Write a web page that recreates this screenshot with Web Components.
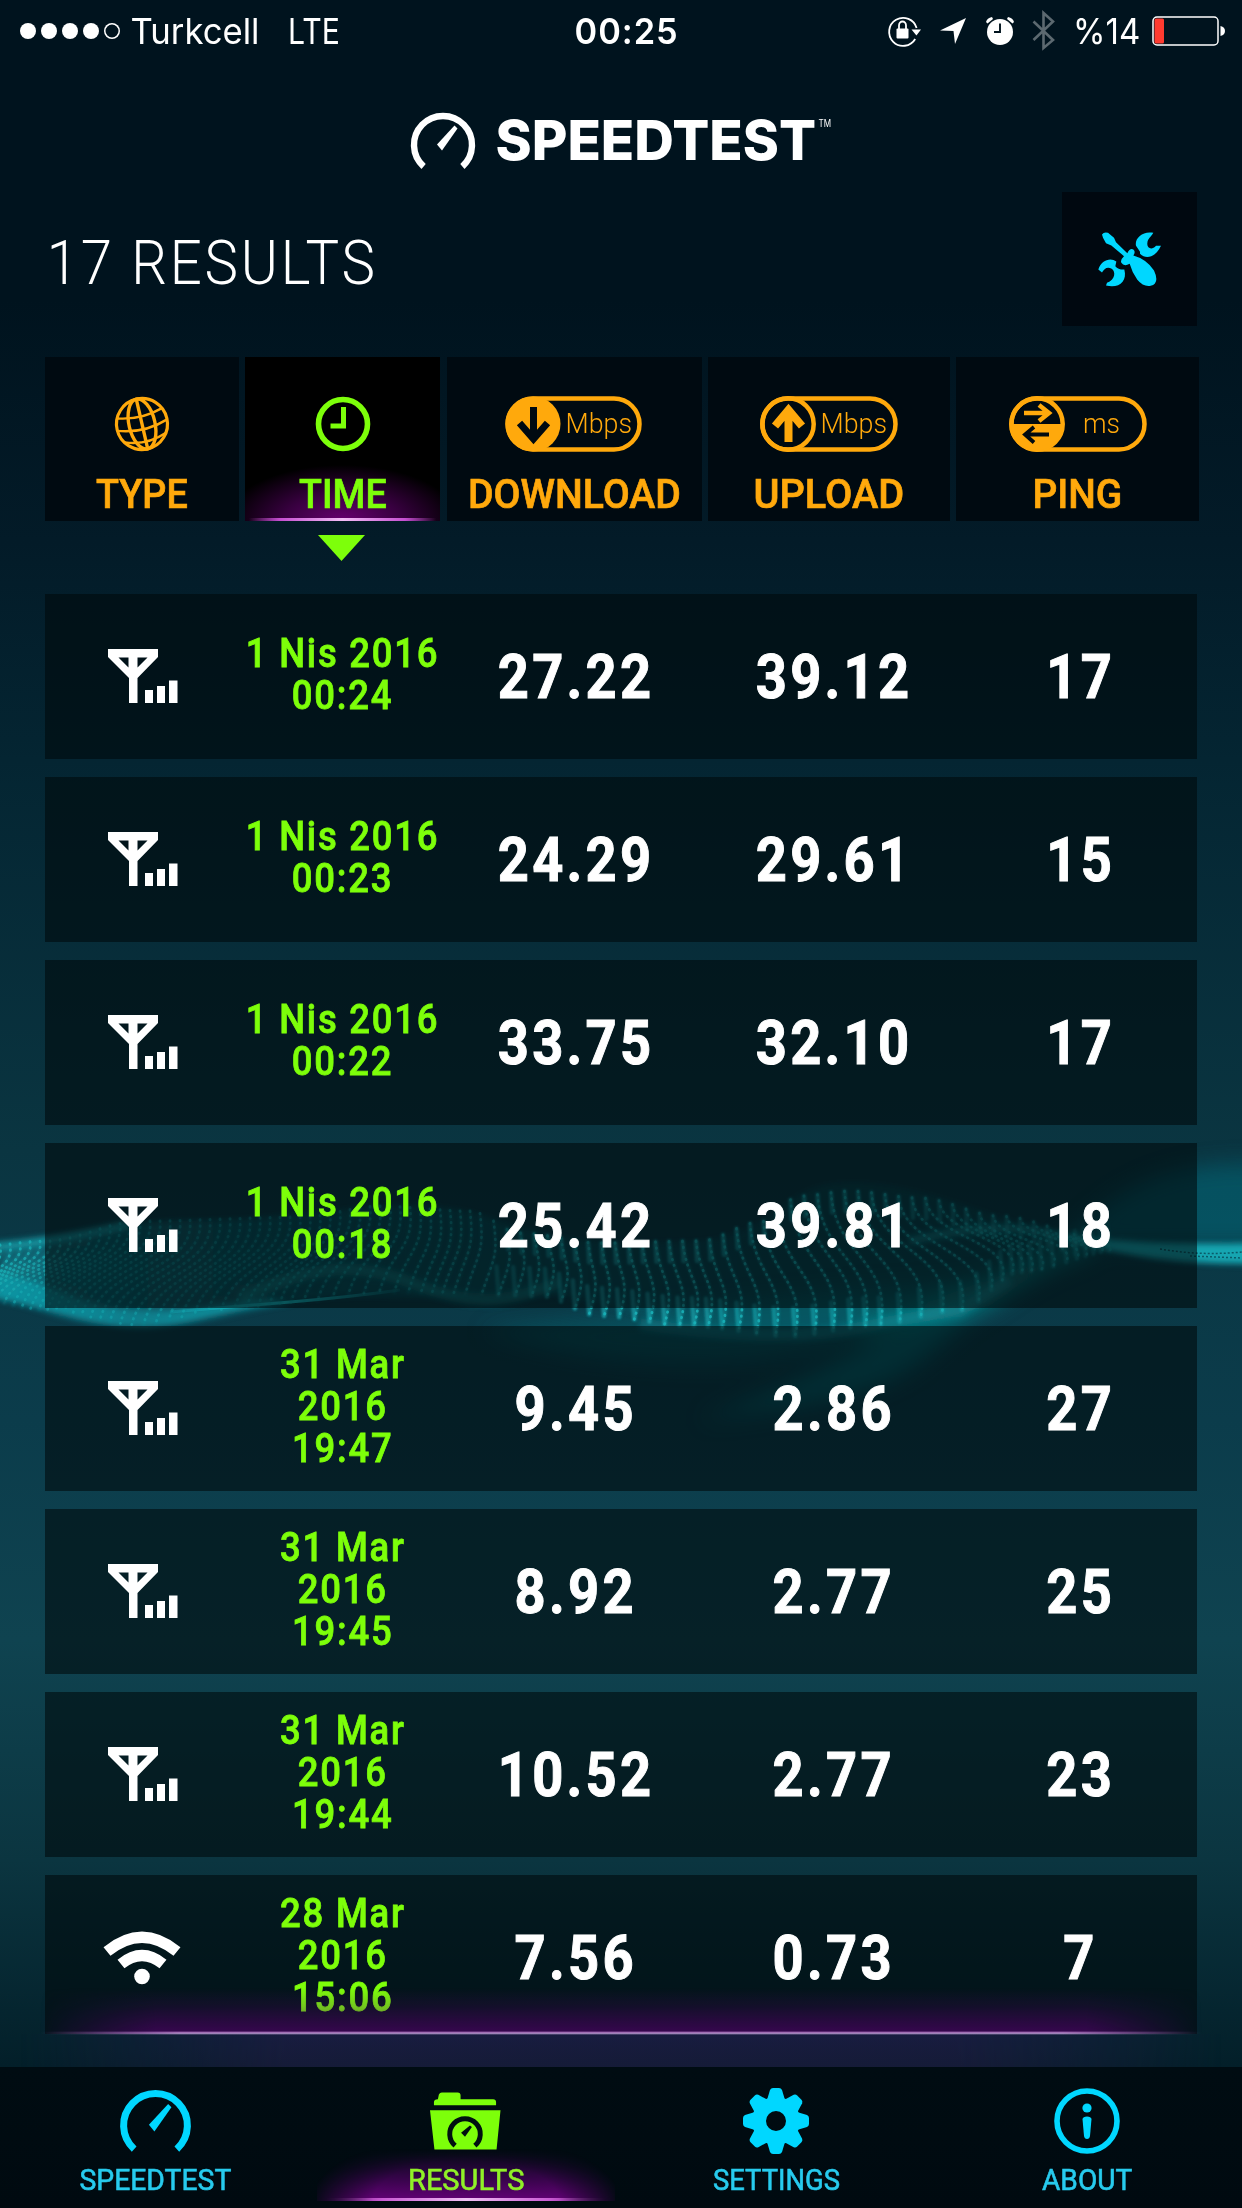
<!DOCTYPE html>
<html lang="tr">
<head>
<meta charset="utf-8">
<title>Speedtest</title>
<style>
    body {
        margin: 0;
        background: #00131e;
    }
</style>
</head>
<body>
<speedtest-app></speedtest-app>

<script>
const gauge = `
    <path d="M12.6 61.5A29 29 0 1 1 51.4 61.5" fill="none" stroke="currentColor" stroke-width="6.4"/>
    <path d="M26 39.5 43.5 20.5 46.5 23.5 31 45.5Z" fill="currentColor"/>
`;

const pill = `<rect x="2.5" y="2.5" width="133" height="51" rx="25.5" fill="none" stroke="currentColor" stroke-width="4.5"/>`;

// [viewBox, markup]
const icons = {
  gauge: ['0 6 64 60', gauge],
  lock: ['0 0 34 34', `
    <path d="M28.2 25A14 14 0 1 1 29.6 14" fill="none" stroke="currentColor" stroke-width="1.8"/>
    <path d="M24.5 15.5H34L29.4 21.5Z" fill="currentColor"/>
    <rect x="9.5" y="14.5" width="12" height="10" rx="1" fill="currentColor"/>
    <path d="M12 15V11.5a3.5 4 0 0 1 7 0V15" fill="none" stroke="currentColor" stroke-width="1.8"/>
  `],
  arrow: ['0 0 26 26', `<path d="M26 0 15 26 13.5 13 0 12.5Z" fill="currentColor"/>`],
  alarm: ['0 0 28 28', `
    <circle cx="14" cy="15" r="13" fill="currentColor"/>
    <path d="M0 5Q1 1 6 0L7 2 1.5 6.500ZM28 5Q27 1 22 0L21 2 26.500 6.500Z" fill="currentColor"/>
    <path d="M14 6.500V15H8" fill="none" stroke="#00131e" stroke-width="1.900"/>
  `],
  bluetooth: ['0 0 23 42', `<path d="M1.500 11.500 21 30 11.500 38V3L21 11.500 1.500 30" fill="none" stroke="currentColor" stroke-width="2.600"/>`],
  battery: ['0 0 73 30', `
    <rect x="1" y="1" width="65" height="28" rx="4" fill="none" stroke="currentColor" stroke-width="1.500"/>
    <rect x="2.500" y="2.500" width="9.500" height="25" rx="1.500" fill="#ff3b30"/>
    <path d="M68.500 10Q73 11 73 15T68.500 20Z" fill="currentColor"/>
  `],
  tools: ['54 50 192 170', `
    <g fill="currentColor">
      <path d="M66 60Q72 51 84 55L102 70 108 83 142 116Q150 100 160 105 168 111 160 123 200 134 222 168 240 206 212 214 190 218 172 196 156 174 149 148 132 158 124 145 120 136 132 125L94 93 78 86 69 70Z"/>
      <path d="M220 55C190 48 163 70 168 94L180 112V118C198 136 228 128 243 94L228 94C216 108 200 102 202 86 203 72 213 68 220 55Z"/>
      <path d="M55 165C63 137 92 127 109 141L106 155Q115 166 133 165C143 202 115 223 78 213L81 205C106 196 108 172 95 163 82 155 72 163 66 174Z"/>
    </g>
  `],
  globe: ['0 0 56 56', `
    <g fill="none" stroke="currentColor" stroke-width="2.400" transform="rotate(-13 28 28)">
      <circle cx="28" cy="28" r="25.500" stroke-width="3.200"/>
      <ellipse cx="28" cy="28" rx="13" ry="25.500" stroke-width="3.400"/>
      <path d="M28 2V54" stroke-width="3.400"/>
      <path d="M5 17Q28 24 51 17M2 29Q28 38 54 29M7 42Q28 50 49 42"/>
    </g>
  `],
  clock: ['0 0 56 56', `
    <circle cx="28" cy="28" r="24.500" fill="none" stroke="currentColor" stroke-width="5.600"/>
    <path d="M28.500 11V30H15.500" fill="none" stroke="currentColor" stroke-width="5"/>
  `],
  download: ['0 0 138 56', `
    <rect x="2.500" y="2.500" width="132" height="51" rx="25.500" fill="none" stroke="currentColor" stroke-width="4.500"/>
    <circle cx="28" cy="28" r="27.500" fill="currentColor"/>
    <path d="M28.500 11V42M14.500 27 28.500 43 42.500 27" fill="none" stroke="#000a11" stroke-width="7"/>
  `],
  upload: ['0 0 138 56', `${pill}
    <circle cx="28" cy="28" r="25.700" fill="none" stroke="currentColor" stroke-width="4.500"/>
    <path d="M28.500 46V14M15 30 28.500 14 42 30" fill="none" stroke="currentColor" stroke-width="8"/>
  `],
  ping: ['0 0 138 56', `${pill}
    <circle cx="28" cy="28" r="25.700" fill="none" stroke="currentColor" stroke-width="4.500"/>
    <path d="M2 28H54A26 26 0 0 1 2 28Z" fill="currentColor"/>
    <path d="M15 17H39M30 9 40 17 30 25" fill="none" stroke="currentColor" stroke-width="4.500"/>
    <path d="M40 38.500H17M25 31 16 38.500 25 46.500" fill="none" stroke="#000a11" stroke-width="3.800"/>
  `],
  cell: ['0 0 70 55', `
    <path d="M0 0H50V8L29.500 29V54H21V29L0 8ZM10.500 8.500 20.500 18.500V8.500ZM29.500 8.500V18.500L39.500 8.500Z" fill="currentColor" fill-rule="evenodd"/>
    <path d="M37 41H45V54H37ZM49 37H57V54H49ZM61 31.500H69.500V54H61Z" fill="currentColor"/>
  `],
  wifi: ['0 0 78 54', `
    <path d="M4 20.500Q39 -8 74 20.500M18 33Q39 16 60 33" fill="none" stroke="currentColor" stroke-width="11"/>
    <circle cx="39" cy="45.500" r="7.800" fill="currentColor"/>
  `],
  folder: ['0 0 72 58', `
    <path d="M4 13V10Q4 7 8 7L9 2Q10 0 12 0H28Q31 0 31 3V7H64Q67 7 67 10V13ZM0 18H71.500L67.500 58H4.500Z" fill="currentColor"/>
    <path d="M25.500 54A15.500 15.500 0 1 1 45.500 54" fill="none" stroke="#001010" stroke-width="5"/>
    <path d="M31.500 41 40.500 33.500 42.500 35 35.500 45Z" fill="#001010"/>
  `],
  gear: ['-33 -33 66 66', `
    <circle r="17" fill="none" stroke="currentColor" stroke-width="14"/>
    ${[0, 45, 90, 135, 180, 225, 270, 315].map(a => `
      <path transform="rotate(${a})" d="M-9 -21-6 -31Q-5 -33-3 -33H3Q5 -33 6 -31L9 -21Z" fill="currentColor"/>
    `).join('')}
  `],
  info: ['0 0 66 66', `
    <circle cx="33" cy="33" r="30" fill="none" stroke="currentColor" stroke-width="5.600"/>
    <circle cx="33" cy="20" r="4.600" fill="currentColor"/>
    <path d="M28.500 31Q29 28.500 33 28.500T37.500 31L36 48Q35.500 51 33 51T30 48Z" fill="currentColor"/>
  `],
};

class AppIcon extends HTMLElement {
  constructor() {
    super();
    this.root = this.attachShadow({ mode: 'open' });
  }

  connectedCallback() {
    const [box, markup] = icons[this.getAttribute('name')];
    const width = this.getAttribute('width');
    const height = this.getAttribute('height');
    this.root.innerHTML = `
      <style>
        :host { display: block; flex: none; width: ${width}px; height: ${height}px; }
        svg { display: block; overflow: visible; }
      </style>
      <svg width="${width}" height="${height}" viewBox="${box}">${markup}</svg>
    `;
  }
}

// Condenses or widens its text to the given width
class FitText extends HTMLElement {
  constructor() {
    super();
    this.root = this.attachShadow({ mode: 'open' });
  }

  connectedCallback() {
    const width = Number(this.getAttribute('width'));
    this.root.innerHTML = `
      <style>
        :host { display: flex; flex: none; justify-content: center; width: ${width}px; }
        span { flex: none; display: block; white-space: nowrap; }
      </style>
      <span><slot></slot></span>
    `;
    const span = this.root.querySelector('span');
    const spacing = parseFloat(getComputedStyle(span).letterSpacing) || 0;
    span.style.marginRight = `${-spacing}px`;
    span.style.transform = `scaleX(${width / (span.offsetWidth - spacing)})`;
  }
}

class WaveBackdrop extends HTMLElement {
  constructor() {
    super();
    this.root = this.attachShadow({ mode: 'open' });
    this.root.innerHTML = `
      <style>
        :host { display: block; }
        svg { display: block; }
      </style>
      <svg width="1242" height="330" viewBox="0 1130 1242 330">
        <defs>
          <filter id="soft" x="-20%" y="-40%" width="140%" height="180%"><feGaussianBlur stdDeviation="3"/></filter>
          <filter id="haze" x="-30%" y="-60%" width="160%" height="220%"><feGaussianBlur stdDeviation="11"/></filter>
          <filter id="smooth" x="-5%" y="-10%" width="110%" height="120%"><feGaussianBlur stdDeviation=".9"/></filter>
          <linearGradient id="sheet">
            <stop offset="0" stop-color="#11a3b4" stop-opacity=".42"/>
            <stop offset=".25" stop-color="#11838e" stop-opacity=".3"/>
            <stop offset=".6" stop-color="#118a94" stop-opacity=".14"/>
            <stop offset="1" stop-color="#11838e" stop-opacity=".14"/>
          </linearGradient>
          <linearGradient id="rim">
            <stop offset="0" stop-color="#13aebb" stop-opacity=".3"/>
            <stop offset=".5" stop-color="#18c0ca"/>
            <stop offset="1" stop-color="#18b9c2" stop-opacity=".15"/>
          </linearGradient>
          <linearGradient id="foot">
            <stop offset="0" stop-color="#10a0ae" stop-opacity=".85"/>
            <stop offset=".5" stop-color="#10a0ae" stop-opacity=".5"/>
            <stop offset="1" stop-color="#14b4c0" stop-opacity=".8"/>
          </linearGradient>
        </defs>
        <g filter="url(#haze)">
          <path d="M1060 1245C1110 1200 1150 1158 1270 1165V1245H1080Z" fill="#0a7385" opacity=".45"/>
          <path d="M1110 1235C1030 1280 990 1300 940 1345S850 1400 700 1420C800 1380 880 1350 930 1300Z" fill="#0c8791" opacity=".5"/>
          <path d="M480 1330C600 1370 760 1380 900 1330L1000 1280 850 1290Z" fill="#0c8791" opacity=".28"/>
          <path d="M1090 1245Q1030 1262 990 1295L860 1330" stroke="#0d9a97" stroke-width="20" fill="none" opacity=".38"/>
        </g>
        <g filter="url(#soft)">
          <path d="M0 1246C60 1240 110 1220 200 1220S360 1202 430 1206 520 1240 620 1242 740 1240 790 1200 940 1196 1000 1216 1100 1240 1242 1244V1264C1160 1264 1120 1254 1060 1240 1000 1290 960 1312 900 1326S760 1340 690 1326 560 1285 480 1294 360 1290 290 1303 180 1330 120 1326 40 1306 0 1300Z" fill="url(#sheet)"/>
          <path d="M-20 1268C40 1278 80 1306 130 1310S200 1306 270 1299L290 1303C220 1308 190 1328 140 1328S50 1306 -20 1296Z" fill="url(#foot)"/>
          <path d="M-20 1247Q50 1243 130 1224" stroke="#19b5c0" stroke-width="7" fill="none" opacity=".7"/>
          <path d="M1050 1236C1120 1240 1160 1246 1262 1243V1264C1160 1264 1120 1254 1050 1236Z" fill="#17b7c2" opacity=".85"/>
          <path d="M910 1241Q990 1222 1040 1232T1110 1245" stroke="#16a0a6" stroke-width="7" fill="none" opacity=".6"/>
          <path d="M640 1324Q780 1344 860 1328T960 1311L1010 1280" stroke="#12949f" stroke-width="12" fill="none" opacity=".4"/>
          <path d="M240 1298C320 1262 360 1262 420 1286S520 1298 560 1282" stroke="#14888e" stroke-width="11" fill="none" opacity=".6"/>
        </g>
        <path d="M170 1312Q230 1307 290 1302T400 1290" stroke="url(#rim)" stroke-width="3" fill="none"/>
        <path d="M1160 1249Q1200 1256 1242 1252M1190 1256L1242 1258" stroke="#0a5a68" stroke-width="1.500" stroke-dasharray="2 2" fill="none"/>
        <g class="strands" fill="none" stroke-linecap="round"></g>
      </svg>
    `;
    this.drawStrands();
  }

  drawStrands() {
    const top = [[-20, 1246], [45, 1241], [140, 1221], [300, 1217], [380, 1206], [470, 1211], [520, 1233], [600, 1243], [700, 1241], [760, 1222], [800, 1196], [850, 1191], [920, 1198], [1000, 1216], [1100, 1238]];
    const bottom = [[-20, 1300], [45, 1310], [140, 1325], [220, 1310], [300, 1302], [380, 1292], [480, 1294], [540, 1296], [600, 1316], [690, 1326], [790, 1336], [870, 1326], [960, 1310], [1020, 1272], [1120, 1250]];
    const skew = [[-20, -30], [60, -75], [200, -90], [340, -60], [450, -18], [560, 0], [700, 12], [820, 48], [900, 80], [1000, 60], [1100, 30]];
    const glow = [[-20, .8], [140, .4], [300, .35], [450, .5], [600, .9], [750, .85], [850, .7], [960, .5], [1100, .3]];
    const at = (points, x) => {
      let i = 1;
      while (i < points.length - 1 && points[i][0] < x) i++;
      const [[x0, y0], [x1, y1]] = [points[i - 1], points[i]];
      const t = Math.max(0, Math.min(1, (x - x0) / (x1 - x0)));
      return y0 + (y1 - y0) * t * t * (3 - 2 * t);
    };
    let dots = '';
    let lines = '';
    for (let x = 0; x < 1080; x += x < 480 ? 10 : 13.5) {
      const end = x + at(skew, x);
      const y0 = at(top, x);
      const y1 = at(bottom, end);
      const mid = y0 + (y1 - y0) * 0.5;
      const d = `M${x} ${y0.toFixed(1)}C${x + 5} ${mid.toFixed(1)} ${end + 12} ${mid.toFixed(1)} ${end.toFixed(1)} ${y1.toFixed(1)}`;
      const o = at(glow, x);
      dots += `<path d="${d}" stroke="#1ab2b8" stroke-width="2.800" stroke-dasharray=".5 5.500" opacity="${o}"/>`;
      lines += `<path d="${d}" stroke="#14919a" stroke-width="3.200" opacity="${o * 0.55}"/>`;
      if (x > 500) {
        lines += `<path d="M${x} ${y0.toFixed(1)}l1 20M${end - 2} ${y1 - 28}L${end} ${y1.toFixed(1)}" stroke="#1ab2bb" stroke-width="4.500" opacity="${o * 0.65}"/>`;
      }
    }
    this.root.querySelector('.strands').innerHTML = `<g filter="url(#smooth)">${lines}</g>${dots}`;
  }
}

class StatusBar extends HTMLElement {
  constructor() {
    super();
    this.root = this.attachShadow({ mode: 'open' });
    this.root.innerHTML = `
      <style>
        :host {
            display: grid;
            grid-template-columns: 555px 1fr auto;
            align-items: center;
            height: 62px;
            box-sizing: border-box;
            padding: 0 17px 0 20px;
            font: 400 36px/62px Inter, sans-serif;
            color: #fff;
        }
        .left, .right { display: flex; align-items: center; }
        .dots { display: flex; gap: 5px; margin-right: 10px; }
        .dots i { width: 16px; height: 16px; border-radius: 50%; background: #fff; }
        .dots i:last-child { background: none; box-shadow: inset 0 0 0 1.5px #fff; }
        .net { margin-left: 29px; }
        .time { font-weight: 600; letter-spacing: 1px; }
        .dim { color: #5c6970; }
      </style>
      <div class="left">
        <div class="dots"><i></i><i></i><i></i><i></i><i></i></div>
        <fit-text width="129">Turkcell</fit-text>
        <fit-text class="net" width="52">LTE</fit-text>
      </div>
      <fit-text class="time" width="103">00:25</fit-text>
      <div class="right">
        <app-icon name="lock" width="34" height="34"></app-icon>
        <app-icon name="arrow" width="26" height="26" style="margin-left:19px"></app-icon>
        <app-icon name="alarm" width="28" height="28" style="margin-left:20px"></app-icon>
        <app-icon class="dim" name="bluetooth" width="23" height="42" style="margin-left:18px"></app-icon>
        <fit-text width="67" style="margin:0 12px 0 18px">%14</fit-text>
        <app-icon name="battery" width="73" height="30"></app-icon>
      </div>
    `;
  }
}

class BrandHeader extends HTMLElement {
  constructor() {
    super();
    this.root = this.attachShadow({ mode: 'open' });
    this.root.innerHTML = `
      <style>
        :host {
            display: flex;
            justify-content: center;
            align-items: flex-start;
            height: 130px;
            box-sizing: border-box;
            padding-top: 49px;
            color: #fff;
            font: 800 55px/58px Inter, sans-serif;
        }
        .name { margin-left: 21px; }
        .tm { margin-left: 2px; font: 400 10px/10px Inter, sans-serif; padding-top: 7px; }
      </style>
      <app-icon name="gauge" width="64" height="60"></app-icon>
      <fit-text class="name" width="321">SPEEDTEST</fit-text>
      <fit-text class="tm" width="13">TM</fit-text>
    `;
  }
}

class ResultsTitle extends HTMLElement {
  constructor() {
    super();
    this.root = this.attachShadow({ mode: 'open' });
    this.root.innerHTML = `
      <style>
        :host {
            display: flex;
            justify-content: space-between;
            height: 134px;
            margin: 0 45px 31px 47px;
            color: #fff;
            font: 300 61px/143px Roboto, sans-serif;
        }
        button {
            display: grid;
            place-items: center;
            width: 135px;
            height: 134px;
            padding: 0;
            border: 0;
            background: #000810;
            color: #00d7ff;
        }
      </style>
      <fit-text width="328" style="letter-spacing:3px"><slot></slot></fit-text>
      <button><app-icon name="tools" width="64" height="57"></app-icon></button>
    `;
  }
}

class SortTab extends HTMLElement {
  constructor() {
    super();
    this.root = this.attachShadow({ mode: 'open' });
    const unit = this.getAttribute('unit');
    this.root.innerHTML = `
      <style>
        :host {
            position: relative;
            display: flex;
            flex-direction: column;
            align-items: center;
            box-sizing: border-box;
            height: 164px;
            padding-top: 39px;
            background: #000a11;
            color: #ffa90c;
            font: 500 41px/50px Roboto, sans-serif;
        }
        :host([active]) { background: #000; color: #7dff0a; }
        :host([active])::before, :host([active])::after {
            content: '';
            position: absolute;
            inset: auto 0 0 0;
            height: 56px;
            background: radial-gradient(ellipse 60% 100% at 50% 100%, rgba(139, 0, 150, .75), rgba(110, 0, 125, .5) 50%, transparent);
        }
        :host([active])::after {
            height: 3px;
            background: linear-gradient(90deg, transparent 2%, #c54fd0 18%, #f3bdf6 50%, #c54fd0 82%, transparent 98%);
        }
        .icon { display: grid; height: 56px; margin-bottom: 17px; align-items: center; }
        .icon > * { grid-area: 1 / 1; }
        .label { -webkit-text-stroke: .7px; }
        .unit { position: relative; justify-self: end; font: 300 28px/56px Roboto, sans-serif; }
      </style>
      <div class="icon">
        <app-icon name="${this.getAttribute('icon')}" width="${unit ? 138 : 56}" height="56"></app-icon>
        ${unit ? `<fit-text class="unit" width="${unit === 'ms' ? 37 : 66}" style="margin-right:${unit === 'ms' ? 26 : 11}px">${unit}</fit-text>` : ''}
      </div>
      <fit-text class="label" width="${this.getAttribute('width')}"><slot></slot></fit-text>
    `;
  }
}

class ResultRow extends HTMLElement {
  constructor() {
    super();
    this.root = this.attachShadow({ mode: 'open' });
    const get = name => this.getAttribute(name);
    const wifi = get('type') === 'wifi';
    this.root.innerHTML = `
      <style>
        :host {
            display: grid;
            grid-template-columns: 194px 208px 254px 262px 232px;
            align-items: center;
            justify-items: center;
            flex: none;
            height: 165px;
            background: rgba(0, 8, 11, .58);
            color: #fff;
            font: 700 61px/160px Roboto, sans-serif;
        }
        .when {
            padding-bottom: 5px;
            margin: 0 -1px 0 -2px;
            color: #7dff0a;
            font: 500 40.5px/42px Roboto, sans-serif;
            letter-spacing: 2px;
            text-align: center;
            white-space: pre;
            transform: scaleX(.9);
            -webkit-text-stroke: .8px;
        }
        .value {
            transform: scaleX(.89);
            letter-spacing: 3.7px;
            margin: 1px -3.7px 0 0;
            -webkit-text-stroke: 1px;
        }
        app-icon { margin-left: ${wifi ? 0 : 2}px; }
      </style>
      <app-icon name="${get('type')}" width="${wifi ? 78 : 70}" height="${wifi ? 54 : 55}"></app-icon>
      <div class="when">${get('when').replaceAll('|', '\n')}</div>
      <div class="value">${get('down')}</div>
      <div class="value">${get('up')}</div>
      <div class="value">${get('ping')}</div>
    `;
  }
}

class ResultList extends HTMLElement {
  constructor() {
    super();
    this.root = this.attachShadow({ mode: 'open' });
    this.root.innerHTML = `
      <style>
        :host { position: relative; display: block; height: 1473px; }
        .rows {
            display: flex;
            flex-direction: column;
            gap: 18px;
            height: 1440px;
            padding: 0 45px;
            overflow: hidden;
        }
        .glow {
            position: absolute;
            inset: auto 40px 33px 40px;
            height: 46px;
            background: linear-gradient(transparent, rgba(85, 0, 105, .22) 40%, rgba(84, 0, 108, .68));
            mask: linear-gradient(90deg, transparent, #000 10%, #000 90%, transparent);
        }
        .line {
            position: absolute;
            inset: auto 40px 32px 40px;
            height: 4px;
            background: linear-gradient(transparent, #a06bb4 35%, #a58cc0 60%, transparent);
            mask: linear-gradient(90deg, transparent, #000 12%, #000 88%, transparent);
        }
        .below {
            position: absolute;
            inset: auto 20px 0 20px;
            height: 33px;
            background: linear-gradient(rgba(32, 26, 72, .7), rgba(30, 26, 62, .7));
            mask: linear-gradient(90deg, transparent, #000 22%, #000 78%, transparent);
        }
      </style>
      <div class="rows"><slot></slot></div>
      <div class="below"></div>
      <div class="glow"></div>
      <div class="line"></div>
    `;
  }
}

class NavItem extends HTMLElement {
  constructor() {
    super();
    this.root = this.attachShadow({ mode: 'open' });
    const get = name => this.getAttribute(name);
    this.root.innerHTML = `
      <style>
        :host {
            position: relative;
            display: flex;
            flex-direction: column;
            align-items: center;
            color: #00d7ff;
            font: 400 30px/32px Roboto, sans-serif;
        }
        :host([active]) { color: #7dff0a; }
        :host([active])::before {
            content: '';
            position: absolute;
            inset: auto 6px 7px 6px;
            height: 52px;
            background:
                linear-gradient(90deg, transparent 3%, #c95bd3 22%, #f0c0f4 50%, #c95bd3 78%, transparent 97%) bottom / 100% 3px no-repeat,
                linear-gradient(transparent, rgba(95, 0, 118, .55) 55%, rgba(118, 0, 138, .85));
            mask: radial-gradient(ellipse 52% 130% at 50% 100%, #000 60%, transparent);
        }
        .icon { display: grid; place-items: center; height: 66px; margin: 21px 0 10px; }
        .label { position: relative; color: #27cbee; -webkit-text-stroke: .6px; }
        :host([active]) .label { color: #90f028; }
      </style>
      <div class="icon"><app-icon name="${get('icon')}" width="${get('icon-width')}" height="${get('icon-height')}"></app-icon></div>
      <fit-text class="label" width="${get('width')}"><slot></slot></fit-text>
    `;
  }
}

class SpeedtestApp extends HTMLElement {
  constructor() {
    super();
    this.root = this.attachShadow({ mode: 'open' });
    this.renderHTML();
  }

  renderHTML() {
    this.root.innerHTML = `
      <style>
        :host {
            position: relative;
            display: block;
            width: 1242px;
            height: 2208px;
            overflow: hidden;
            background: linear-gradient(#00131e 0, #00131e 300px, #031b28 540px, #042532 760px, #0a3541 1150px, #0b3c4b 1420px, #0f4350 1640px, #0b3540 1860px, #031f29 2066px);
        }
        wave-backdrop { position: absolute; inset: 1130px 0 auto 0; }
        .page { position: relative; }
        .tabs {
            display: grid;
            grid-template-columns: 194px 195px 255px 242px 243px;
            justify-content: space-between;
            margin: 0 43px 0 45px;
        }
        .sort { display: block; margin: 14px 0 33px 318px; }
        nav {
            display: grid;
            grid-template-columns: repeat(4, 1fr);
            height: 141px;
            background: linear-gradient(#000c12, #000a10);
        }
      </style>
      <wave-backdrop></wave-backdrop>
      <div class="page">
        <status-bar></status-bar>
        <brand-header></brand-header>
        <results-title>17 RESULTS</results-title>
        <div class="tabs">
          <sort-tab icon="globe" width="92">TYPE</sort-tab>
          <sort-tab icon="clock" width="88" active>TIME</sort-tab>
          <sort-tab icon="download" unit="Mbps" width="213">DOWNLOAD</sort-tab>
          <sort-tab icon="upload" unit="Mbps" width="151">UPLOAD</sort-tab>
          <sort-tab icon="ping" unit="ms" width="90">PING</sort-tab>
        </div>
        <svg class="sort" width="47" height="26"><path d="M0 0H47L23.500 26Z" fill="#7dff0a"/></svg>
        <result-list>
          <result-row type="cell" when="1 Nis 2016|00:24" down="27.22" up="39.12" ping="17"></result-row>
          <result-row type="cell" when="1 Nis 2016|00:23" down="24.29" up="29.61" ping="15"></result-row>
          <result-row type="cell" when="1 Nis 2016|00:22" down="33.75" up="32.10" ping="17"></result-row>
          <result-row type="cell" when="1 Nis 2016|00:18" down="25.42" up="39.81" ping="18"></result-row>
          <result-row type="cell" when="31 Mar|2016|19:47" down="9.45" up="2.86" ping="27"></result-row>
          <result-row type="cell" when="31 Mar|2016|19:45" down="8.92" up="2.77" ping="25"></result-row>
          <result-row type="cell" when="31 Mar|2016|19:44" down="10.52" up="2.77" ping="23"></result-row>
          <result-row type="wifi" when="28 Mar|2016|15:06" down="7.56" up="0.73" ping="7"></result-row>
        </result-list>
        <nav>
          <nav-item icon="gauge" icon-width="73" icon-height="66" width="152">SPEEDTEST</nav-item>
          <nav-item icon="folder" icon-width="71" icon-height="58" width="116" active>RESULTS</nav-item>
          <nav-item icon="gear" icon-width="66" icon-height="66" width="127">SETTINGS</nav-item>
          <nav-item icon="info" icon-width="66" icon-height="66" width="90">ABOUT</nav-item>
        </nav>
      </div>
    `;
  }
}

customElements.define('app-icon', AppIcon);
customElements.define('fit-text', FitText);
customElements.define('wave-backdrop', WaveBackdrop);
customElements.define('status-bar', StatusBar);
customElements.define('brand-header', BrandHeader);
customElements.define('results-title', ResultsTitle);
customElements.define('sort-tab', SortTab);
customElements.define('result-row', ResultRow);
customElements.define('result-list', ResultList);
customElements.define('nav-item', NavItem);
customElements.define('speedtest-app', SpeedtestApp);
</script>
</body>
</html>
